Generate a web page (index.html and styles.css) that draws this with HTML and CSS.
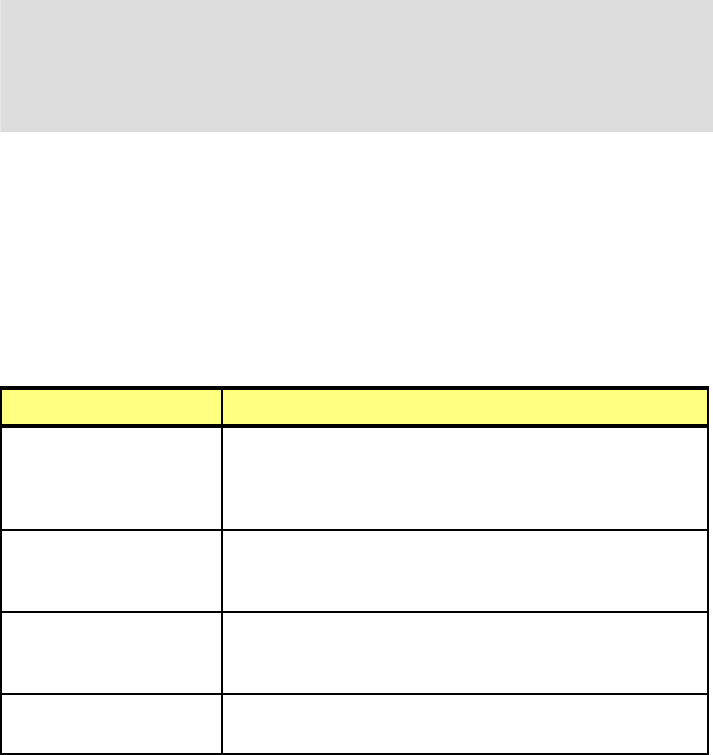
FILE: index.html
```html
<!DOCTYPE html>
<html>
<head>
<meta charset="utf-8">
<link rel="stylesheet" href="styles.css">
</head>
<body>
<div class="banner"></div>
<div class="grid">
  <div class="cell head first"></div>
  <div class="cell head"></div>
  <div class="cell r1 first"></div>
  <div class="cell r1"></div>
  <div class="cell r2 first"></div>
  <div class="cell r2"></div>
  <div class="cell r3 first"></div>
  <div class="cell r3"></div>
  <div class="cell r4 first last"></div>
  <div class="cell r4 last"></div>
</div>
</body>
</html>
```
FILE: styles.css
```css
html, body {
  margin: 0;
  padding: 0;
  background: #ffffff;
  font-family: "Liberation Sans", Arial, sans-serif;
}
.banner {
  height: 132px;
  background: #dddddd;
  border-left: 1px solid #e6e6e6;
  box-sizing: border-box;
}
.grid {
  margin-top: 254px;
  width: 709px;
  box-sizing: border-box;
  display: grid;
  grid-template-columns: 221px 1fr;
  border-top: 4px solid #000;
  border-left: 2px solid #000;
  border-right: 2px solid #000;
  border-bottom: 2px solid #000;
}
.cell {
  box-sizing: border-box;
  border-bottom: 2px solid #000;
}
.first {
  border-right: 2px solid #000;
}
.head {
  height: 38px;
  background: #ffff80;
  border-bottom: 4px solid #000;
}
.r1 { height: 103px; }
.r2 { height: 82px; }
.r3 { height: 82px; }
.r4 { height: 58px; }
.last { border-bottom: none; }
```
